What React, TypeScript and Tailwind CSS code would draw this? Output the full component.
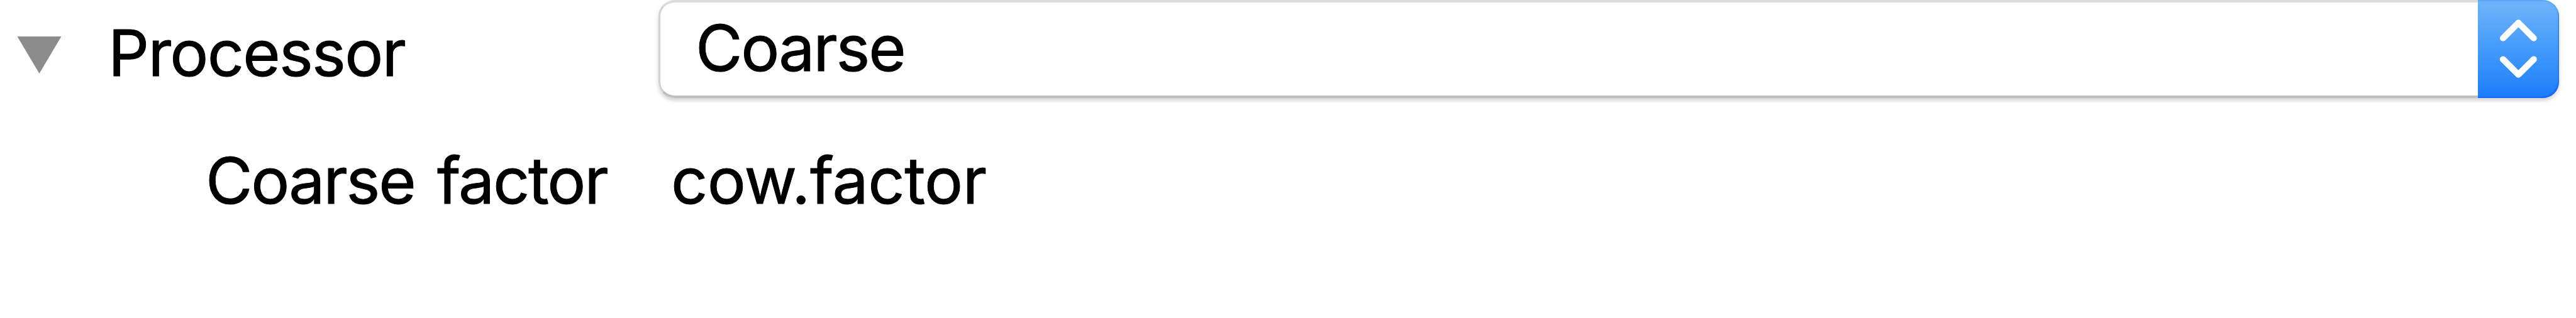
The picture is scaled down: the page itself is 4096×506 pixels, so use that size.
import React from 'react';

/**
 * Processor settings
 *
 * A disclosure row with a popup button, and the parameter row below it.
 */

function DisclosureTriangle() {
  return (
    <svg className="mt-[58px] ml-[27px] h-[59px] w-[71px] shrink-0" viewBox="0 0 71 59">
      <path d="M0.5 0H70.5L35.5 59Z" fill="#8c8c8c" />
    </svg>
  );
}

function PopupArrows() {
  return (
    <svg className="h-[156px] w-[129px]" viewBox="0 0 129 156" fill="none">
      <path
        d="M40 60.7L64.4 36.3L88.8 60.7M40 94.4L64.4 118.8L88.8 94.4"
        stroke="white"
        strokeWidth="10"
        strokeLinecap="round"
        strokeLinejoin="round"
      />
    </svg>
  );
}

function PopupButton({ value }: { value: string }) {
  return (
    <div className="mr-[27px] flex h-[156px] flex-1 rounded-[26px] shadow-[0_4px_6px_rgba(0,0,0,0.18)]">
      <div className="flex-1 rounded-l-[26px] border-y-4 border-l-[3px] border-t-[#dcdcdc] border-b-[#bfbfbf] border-l-[#d2d2d2] bg-white pl-[56px]">
        <span className="block h-[144px] leading-[144px] tracking-[-2.2px]">{value}</span>
      </div>
      <div className="w-[129px] overflow-hidden rounded-r-[26px] bg-linear-to-b from-[#70b4f9] via-[#429bfb] to-[#1b7dfb] shadow-[inset_0_3px_2px_-1px_#55a5f6,inset_-2px_-3px_2px_-1px_#1766ff]">
        <PopupArrows />
      </div>
    </div>
  );
}

export default function App() {
  return (
    <div className="h-[506px] w-[4096px] overflow-hidden bg-white font-['Inter',sans-serif] text-[102px] whitespace-nowrap text-black [-webkit-text-stroke:1px_black]">
      <div className="flex h-[208px]">
        <div className="flex w-[1047px] shrink-0">
          <DisclosureTriangle />
          <span className="ml-[74px] h-[168px] leading-[168px] tracking-[-1.75px]">Processor</span>
        </div>
        <PopupButton value="Coarse" />
      </div>
      <div className="flex h-[158px] leading-[158px]">
        <span className="ml-[327px] w-[740px] shrink-0 tracking-[-2.2px] [word-spacing:9px]">Coarse factor</span>
        <span className="tracking-[-0.5px]">cow.factor</span>
      </div>
    </div>
  );
}
